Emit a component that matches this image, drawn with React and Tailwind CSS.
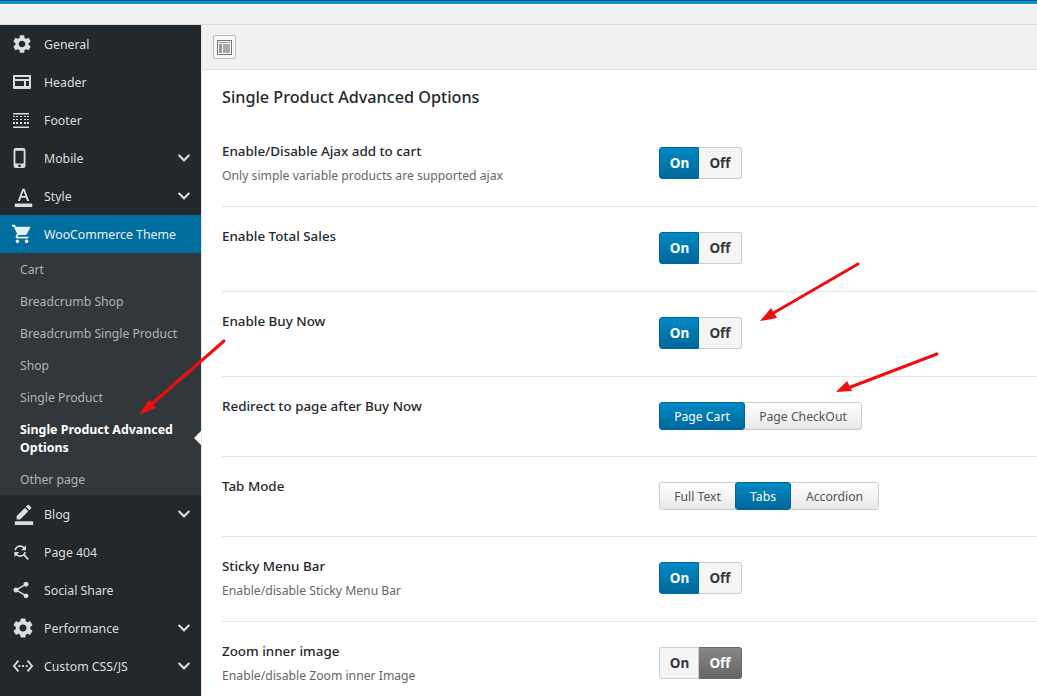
import React from "react";
import { MdSettings, MdShoppingCart, MdBorderColor, MdFindReplace, MdShare, MdSettingsEthernet, MdPhoneIphone, MdFormatColorText } from "react-icons/md";
import { FaChevronDown } from "react-icons/fa";

const HeaderIcon = () => (
  <svg width="18" height="14" viewBox="0 0 18 14" fill="currentColor"><path fillRule="evenodd" d="M1 0h16a1 1 0 0 1 1 1v12a1 1 0 0 1-1 1H1a1 1 0 0 1-1-1V1a1 1 0 0 1 1-1zm1 6v5h9V6H2zm11 0v5h3V6h-3zM2 2v2h14V2H2z" /></svg>
);
const FooterIcon = () => (
  <svg width="16" height="15" viewBox="0 0 16 15" fill="currentColor">
    <path d="M0 0h16v1.5H0zM0 13.5h16V15H0z" />
    <path d="M0 3h2v1H0zM3 3h2v1H3zM7 3h2v1H7zM11 3h2v1h-2zM14 3h2v1h-2zM0 6h2v1H0zM3 6h2v1H3zM7 6h2v1H7zM11 6h2v1h-2zM14 6h2v1h-2zM0 9h2v2H0zM3 9h2v2H3zM7 9h2v2H7zM11 9h2v2h-2zM14 9h2v2h-2z" />
  </svg>
);

const MenuItem = ({ icon, label, chevron, active }) => (
  <div className={`flex h-[38px] items-center pl-[13px] pr-[10px] text-[12.3px] ${active ? "bg-[#006d9f] text-[#e8f1f6]" : "text-[#dcdddd]"}`}>
    <span className="flex w-[31px] shrink-0 items-center">{icon}</span>
    <span className="flex-1 pt-[2px]">{label}</span>
    {chevron && <FaChevronDown className="text-[14px] text-[#d8d9da]" />}
  </div>
);

const SubItem = ({ children, active }) => (
  <div className={`relative px-5 pb-[6px] pt-[8px] leading-[18px] ${active ? "text-[12.4px] font-bold text-white" : "text-[12.2px] text-[#b0b3b5]"}`}>
    {children}
    {active && <span className="absolute right-0 top-1/2 h-0 w-0 -translate-y-1/2 border-y-[7px] border-r-[7px] border-y-transparent border-r-white" />}
  </div>
);

const blue = "bg-linear-to-b from-[#0089c4] to-[#00689c] text-white border-[#006799]";
const plain = "bg-linear-to-b from-white to-[#e8e8e8] text-[#555] border-[#cccccc]";

const Toggle = ({ off }) => (
  <div className="flex h-8 w-[83px] text-[13.5px] font-bold">
    <div className={`flex w-10 items-center justify-center rounded-l-[3px] border pl-px ${off ? "border-[#ccc] bg-[#f5f5f5] text-[#32373c]" : "border-[#006799] bg-linear-to-b from-[#0089c4] to-[#00689c] text-white"}`}>On</div>
    <div className={`flex flex-1 items-center justify-center rounded-r-[3px] border border-l-0 ${off ? "border-[#666] bg-linear-to-b from-[#888] to-[#666] text-white" : "border-[#ccc] bg-[#f5f5f5] text-[#32373c]"}`}>Off</div>
  </div>
);

const Group = ({ items }) => (
  <div className="flex h-[28px] text-[12.2px]">
    {items.map((it, i) => (
      <div
        key={it.label}
        style={{ width: it.w }}
        className={`flex items-center justify-center border pt-[2px] ${it.on ? blue : plain} ${i === 0 ? "rounded-l-[3px]" : "-ml-px"} ${i === items.length - 1 ? "rounded-r-[3px]" : ""} ${it.on ? "z-10 rounded-[3px]" : ""}`}
      >
        {it.label}
      </div>
    ))}
  </div>
);

const Row = ({ title, desc, control, h, last }) => (
  <div style={{ height: h }} className={`flex ${last ? "" : "border-b border-[#e5e5e5]"}`}>
    <div className="w-[437px] shrink-0 pt-[19px]">
      <div className="text-[13.4px] font-medium leading-[20px] text-[#23282d]">{title}</div>
      {desc && <div className="mt-[5px] text-[12.2px] leading-[20px] text-[#666]">{desc}</div>}
    </div>
    <div className="pt-[25px]">{control}</div>
  </div>
);

export default function App() {
  return (
    <div className="relative h-[696px] w-[1037px] overflow-hidden bg-white" style={{ fontFamily: '"Noto Sans", "Open Sans", sans-serif' }}>
      <div className="h-[1px] bg-[#1d4f66]" />
      <div className="h-[3px] bg-[#0096d6]" />
      <div className="h-[1px] bg-white" />
      <div className="h-[20px] border-b border-[#dcdcdc] bg-[#f1f1f1]" />
      <div className="flex h-[671px]">
        <aside className="w-[201px] shrink-0 bg-[#23282d]">
          <MenuItem icon={<MdSettings size={22} className="-ml-[2px]" />} label="General" />
          <MenuItem icon={<HeaderIcon />} label="Header" />
          <MenuItem icon={<FooterIcon />} label="Footer" />
          <MenuItem icon={<MdPhoneIphone size={22} className="-ml-[4px]" />} label="Mobile" chevron />
          <MenuItem icon={<MdFormatColorText size={21} />} label="Style" chevron />
          <MenuItem active icon={<MdShoppingCart size={22} className="-ml-[2px]" />} label="WooCommerce Theme" />
          <div className="h-[242px] bg-[#32373c]">
            <SubItem>Cart</SubItem>
            <SubItem>Breadcrumb Shop</SubItem>
            <SubItem>Breadcrumb Single Product</SubItem>
            <SubItem>Shop</SubItem>
            <SubItem>Single Product</SubItem>
            <SubItem active>Single Product Advanced Options</SubItem>
            <SubItem>Other page</SubItem>
          </div>
          <MenuItem icon={<MdBorderColor size={22} />} label="Blog" chevron />
          <MenuItem icon={<MdFindReplace size={20} className="-ml-[2px]" />} label="Page 404" />
          <MenuItem icon={<MdShare size={20} className="-ml-[2px]" />} label="Social Share" />
          <MenuItem icon={<MdSettings size={24} className="-ml-[2px]" />} label="Performance" chevron />
          <MenuItem icon={<MdSettingsEthernet size={22} className="-ml-[1px]" />} label="Custom CSS/JS" chevron />
        </aside>
        <main className="min-w-0 flex-1 border-l border-[#e5e5e5]">
          <div className="flex h-[45px] items-center border-b border-[#dedede] bg-[#f1f1f1] pl-[11px]">
            <div className="flex h-6 w-[23px] items-center justify-center rounded-[2px] border border-[#bbb] bg-[#f7f7f7]">
              <svg width="15" height="15" viewBox="0 0 15 15">
                <rect x="0.5" y="0.5" width="14" height="14" fill="none" stroke="#777" />
                <rect x="2" y="2" width="11" height="1" fill="#999" />
                <rect x="2" y="4" width="3" height="9" fill="#999" />
                <rect x="6" y="4" width="7" height="9" fill="#aaa" />
              </svg>
            </div>
          </div>
          <div className="pl-[20px]">
            <h1 className="pt-[15px] text-[16.2px] font-medium leading-[24px] text-[#23282d]">Single Product Advanced Options</h1>
            <div className="mt-[13px]">
              <Row h={85} title="Enable/Disable Ajax add to cart" desc="Only simple variable products are supported ajax" control={<Toggle />} />
              <Row h={85} title="Enable Total Sales" control={<Toggle />} />
              <Row h={85} title="Enable Buy Now" control={<Toggle />} />
              <Row h={80} title="Redirect to page after Buy Now" control={<Group items={[{ label: "Page Cart", w: 86, on: true }, { label: "Page CheckOut", w: 118 }]} />} />
              <Row h={80} title="Tab Mode" control={<Group items={[{ label: "Full Text", w: 77 }, { label: "Tabs", w: 56, on: true }, { label: "Accordion", w: 89 }]} />} />
              <Row h={85} title="Sticky Menu Bar" desc="Enable/disable Sticky Menu Bar" control={<Toggle />} />
              <Row h={85} last title="Zoom inner image" desc="Enable/disable Zoom inner Image" control={<Toggle off />} />
            </div>
          </div>
        </main>
      </div>
      <svg className="pointer-events-none absolute left-0 top-0" width="1037" height="696" fill="none">
        <g stroke="#f00d0d" strokeWidth="3" strokeLinecap="round">
          <line x1="224" y1="341" x2="146" y2="409" />
          <line x1="858" y1="264" x2="770" y2="315" />
          <line x1="937" y1="354" x2="848" y2="388" />
        </g>
        <g fill="#f00d0d">
          <polygon points="139,415 149,400 156,408" />
          <polygon points="760,321 771,308 777,318" />
          <polygon points="836,392 847,381 852,391" />
        </g>
      </svg>
    </div>
  );
}
